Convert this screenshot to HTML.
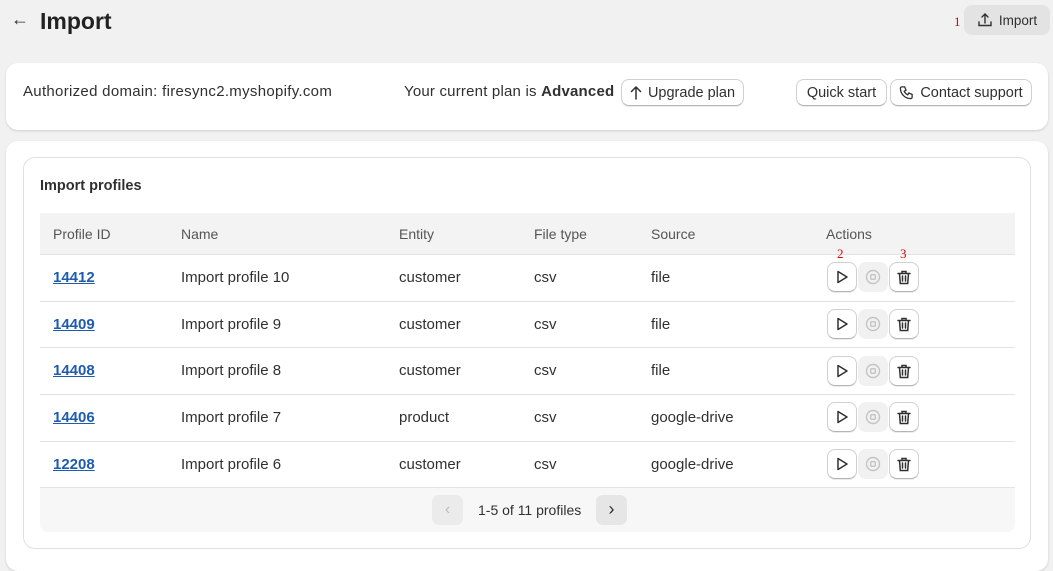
<!DOCTYPE html>
<html><head><style>
*{box-sizing:border-box;margin:0;padding:0}
body{width:1053px;height:557px;overflow:hidden;background:#f1f1f1;font-family:"Liberation Sans",sans-serif;color:#303030;font-size:15px;position:relative}
.abs{position:absolute}
.btn{position:absolute;background:#fff;border:1px solid #d0d0d0;border-bottom-color:#b5b5b5;border-radius:8px;font-size:14.5px;color:#303030;display:flex;align-items:center;justify-content:center;gap:6px;box-shadow:0 1px 0 rgba(0,0,0,.08)}
.card{position:absolute;background:#fff;border-radius:12px;box-shadow:0 1px 2px rgba(0,0,0,.15)}
.row{position:absolute;left:40px;width:975px;border-top:1px solid #e3e3e3}
.row span{position:absolute;top:0;line-height:46px;font-size:15px}
.id{color:#1f5bb0;font-weight:bold;text-decoration:underline}
.red{color:#d00;font-family:"Liberation Serif",serif;font-size:13px;position:absolute}
.ab{position:absolute;width:30px;height:30px;border-radius:8px;display:flex;align-items:center;justify-content:center}
.ab.w{background:#fff;border:1px solid #d0d0d0;border-bottom-color:#b5b5b5;box-shadow:0 1px 0 rgba(0,0,0,.08)}
.ab.g{background:#f1f1f1}
</style></head><body>
<div class="abs" style="left:11px;top:9px;font-size:18px">&#8592;</div>
<div class="abs" style="left:40px;top:8px;font-size:23px;font-weight:bold;color:#222">Import</div>
<div class="red" style="left:954px;top:14px">1</div>
<div class="abs" style="left:964px;top:5px;width:86px;height:30px;background:#e3e3e3;border-radius:8px;display:flex;align-items:center;justify-content:center;gap:6px;font-size:13.5px">
<svg width="16" height="16" viewBox="0 0 16 16" fill="none" stroke="#303030" stroke-width="1.4" stroke-linecap="round"><path d="M8 11V2M5 5l3-3 3 3M2 10v3.5h12V10"/></svg>Import</div>

<div class="card" style="left:6px;top:63px;width:1042px;height:67px">
<div class="abs" style="left:17px;top:20px;letter-spacing:.3px">Authorized domain: firesync2.myshopify.com</div>
<div class="abs" style="left:398px;top:20px;letter-spacing:.2px">Your current plan is <b>Advanced</b></div>
<div class="btn" style="left:615px;top:16px;width:123px;height:27px"><svg width="12" height="14" viewBox="0 0 12 14" fill="none" stroke="#303030" stroke-width="1.5" stroke-linecap="round"><path d="M6 13V1M1.5 5.5L6 1l4.5 4.5"/></svg>Upgrade plan</div>
<div class="btn" style="left:790px;top:16px;width:91px;height:27px">Quick start</div>
<div class="btn" style="left:884px;top:16px;width:142px;height:27px"><svg width="15" height="15" viewBox="0 0 16 16" fill="none" stroke="#303030" stroke-width="1.4"><path d="M3 2h3l1.5 3.5-2 1.2a8 8 0 0 0 3.8 3.8l1.2-2L14 10v3a1.5 1.5 0 0 1-1.5 1.5A11 11 0 0 1 1.5 3.5 1.5 1.5 0 0 1 3 2z"/></svg>Contact support</div>
</div>

<div class="card" style="left:6px;top:141px;width:1042px;height:430px">
<div class="abs" style="left:17px;top:16px;width:1008px;height:392px;border:1px solid #e0e0e0;border-radius:12px"></div>
</div>
<div class="abs" style="left:40px;top:178px;font-weight:bold;font-size:14.5px">Import profiles</div>
<div class="abs" style="left:40px;top:213px;width:975px;height:41px;background:#f3f3f3;font-size:14px;color:#555">
<span class="abs" style="left:13px;top:13px">Profile ID</span><span class="abs" style="left:141px;top:13px">Name</span><span class="abs" style="left:359px;top:13px">Entity</span><span class="abs" style="left:494px;top:13px">File type</span><span class="abs" style="left:611px;top:13px">Source</span><span class="abs" style="left:786px;top:13px">Actions</span></div>

<div class="row" style="top:254px"><span class="id" style="left:13px">14412</span><span style="left:141px">Import profile 10</span><span style="left:359px">customer</span><span style="left:494px">csv</span><span style="left:611px">file</span></div>
<div class="row" style="top:301px"><span class="id" style="left:13px">14409</span><span style="left:141px">Import profile 9</span><span style="left:359px">customer</span><span style="left:494px">csv</span><span style="left:611px">file</span></div>
<div class="row" style="top:347px"><span class="id" style="left:13px">14408</span><span style="left:141px">Import profile 8</span><span style="left:359px">customer</span><span style="left:494px">csv</span><span style="left:611px">file</span></div>
<div class="row" style="top:394px"><span class="id" style="left:13px">14406</span><span style="left:141px">Import profile 7</span><span style="left:359px">product</span><span style="left:494px">csv</span><span style="left:611px">google-drive</span></div>
<div class="row" style="top:441px"><span class="id" style="left:13px">12208</span><span style="left:141px">Import profile 6</span><span style="left:359px">customer</span><span style="left:494px">csv</span><span style="left:611px">google-drive</span></div>
<div class="abs" style="left:40px;top:487px;width:975px;height:45px;background:#f7f7f7;border-top:1px solid #e3e3e3;border-radius:0 0 8px 8px"></div>
<div class="abs" style="left:432px;top:495px;width:31px;height:30px;background:#ebebeb;border-radius:7px;color:#bbb;text-align:center;line-height:29px;font-size:16px">&#8249;</div>
<div class="abs" style="left:478px;top:502px;font-size:14px">1-5 of 11 profiles</div>
<div class="abs" style="left:596px;top:495px;width:31px;height:30px;background:#e6e6e6;border-radius:7px;text-align:center;line-height:28px;font-size:18px">&#8250;</div>

<div class="red" style="left:837px;top:246px">2</div>
<div class="red" style="left:900px;top:246px">3</div>
<div id="acts"></div>
<script>
var ys=[262,309,356,402,449],h='';
ys.forEach(function(y){
h+='<div class="ab w" style="left:827px;top:'+y+'px"><svg width="14" height="14" viewBox="0 0 14 14" fill="none" stroke="#303030" stroke-width="1.5" stroke-linejoin="round"><path d="M3 1.5v11l9-5.5z"/></svg></div>';
h+='<div class="ab g" style="left:858px;top:'+y+'px"><svg width="16" height="16" viewBox="0 0 16 16" fill="none" stroke="#c4c4c4" stroke-width="1.4"><circle cx="8" cy="8" r="6.5"/><rect x="5.7" y="5.7" width="4.6" height="4.6" rx="1"/></svg></div>';
h+='<div class="ab w" style="left:889px;top:'+y+'px"><svg width="14" height="15" viewBox="0 0 14 15" fill="none" stroke="#303030" stroke-width="1.5" stroke-linecap="round"><path d="M1 3.5h12M5 3.5V1.5h4v2M2.5 3.5l.8 10h7.4l.8-10M5.5 6v5M8.5 6v5"/></svg></div>';
});
document.getElementById('acts').innerHTML=h;
</script>
</body></html>
